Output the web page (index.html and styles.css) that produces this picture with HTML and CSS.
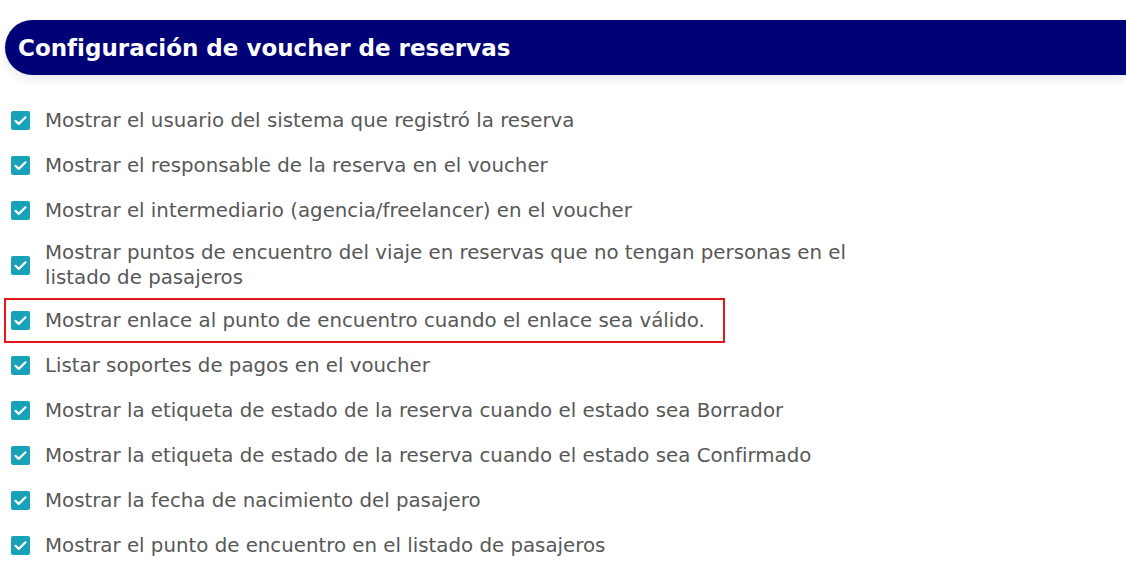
FILE: index.html
```html
<!DOCTYPE html>
<html lang="es">
<head>
  <meta charset="UTF-8" />
  <meta name="viewport" content="width=device-width, initial-scale=1" />
  <title>Configuración de voucher de reservas</title>
  <link rel="stylesheet" href="styles.css">
</head>
<body>

  <section class="panel">
    <h2 class="panel-title">Configuración de voucher de reservas</h2>

    <ul class="options">
      <li class="option"><span class="check"></span><span class="label">Mostrar el usuario del sistema que registró la reserva</span></li>
      <li class="option"><span class="check"></span><span class="label">Mostrar el responsable de la reserva en el voucher</span></li>
      <li class="option"><span class="check"></span><span class="label">Mostrar el intermediario (agencia/freelancer) en el voucher</span></li>
      <li class="option wrap"><span class="check"></span><span class="label">Mostrar puntos de encuentro del viaje en reservas que no tengan personas en el listado de pasajeros</span></li>
      <li class="option marked"><span class="check"></span><span class="label">Mostrar enlace al punto de encuentro cuando el enlace sea válido.</span></li>
      <li class="option"><span class="check"></span><span class="label">Listar soportes de pagos en el voucher</span></li>
      <li class="option"><span class="check"></span><span class="label">Mostrar la etiqueta de estado de la reserva cuando el estado sea Borrador</span></li>
      <li class="option"><span class="check"></span><span class="label">Mostrar la etiqueta de estado de la reserva cuando el estado sea Confirmado</span></li>
      <li class="option"><span class="check"></span><span class="label">Mostrar la fecha de nacimiento del pasajero</span></li>
      <li class="option"><span class="check"></span><span class="label">Mostrar el punto de encuentro en el listado de pasajeros</span></li>
    </ul>
  </section>

</body>
</html>
```

FILE: styles.css
```css
body {
  margin: 0;
  background: #ffffff;
  font-family: "DejaVu Sans", "Open Sans", Arial, sans-serif;
  color: #585858;
}
.panel {
  padding-top: 20px;
}
.panel-title {
  margin: 0 0 0 5px;
  height: 55px;
  display: flex;
  align-items: center;
  padding-left: 13px;
  background: #000077;
  color: #ffffff;
  font-size: 23px;
  font-weight: 700;
  border-radius: 28px 0 0 28px;
  box-shadow: 0 5px 10px rgba(0, 0, 0, 0.08);
}
.options {
  list-style: none;
  margin: 23px 0 0 4px;
  padding: 0;
}
.option {
  display: flex;
  align-items: center;
  width: fit-content;
  padding: 10px 14px 10px 7px;
  font-size: 19.8px;
  line-height: 25px;
}
.option.wrap {
  padding-top: 7px;
  padding-bottom: 8px;
}
.option.marked {
  padding-right: 20px;
  outline: 2px solid #e8141b;
  outline-offset: -2px;
}
.check {
  flex: none;
  width: 19px;
  height: 19px;
  margin-right: 15px;
  border-radius: 2px;
  background: #17a2b8 url("data:image/svg+xml,%3Csvg xmlns='http://www.w3.org/2000/svg' viewBox='0 0 19 19'%3E%3Cpath d='M4.5 9.8l3.2 3.1 6.8-6.6' fill='none' stroke='white' stroke-width='2.2' stroke-linecap='round' stroke-linejoin='round'/%3E%3C/svg%3E") center / 19px 19px no-repeat;
}
.label {
  max-width: 830px;
}
```
